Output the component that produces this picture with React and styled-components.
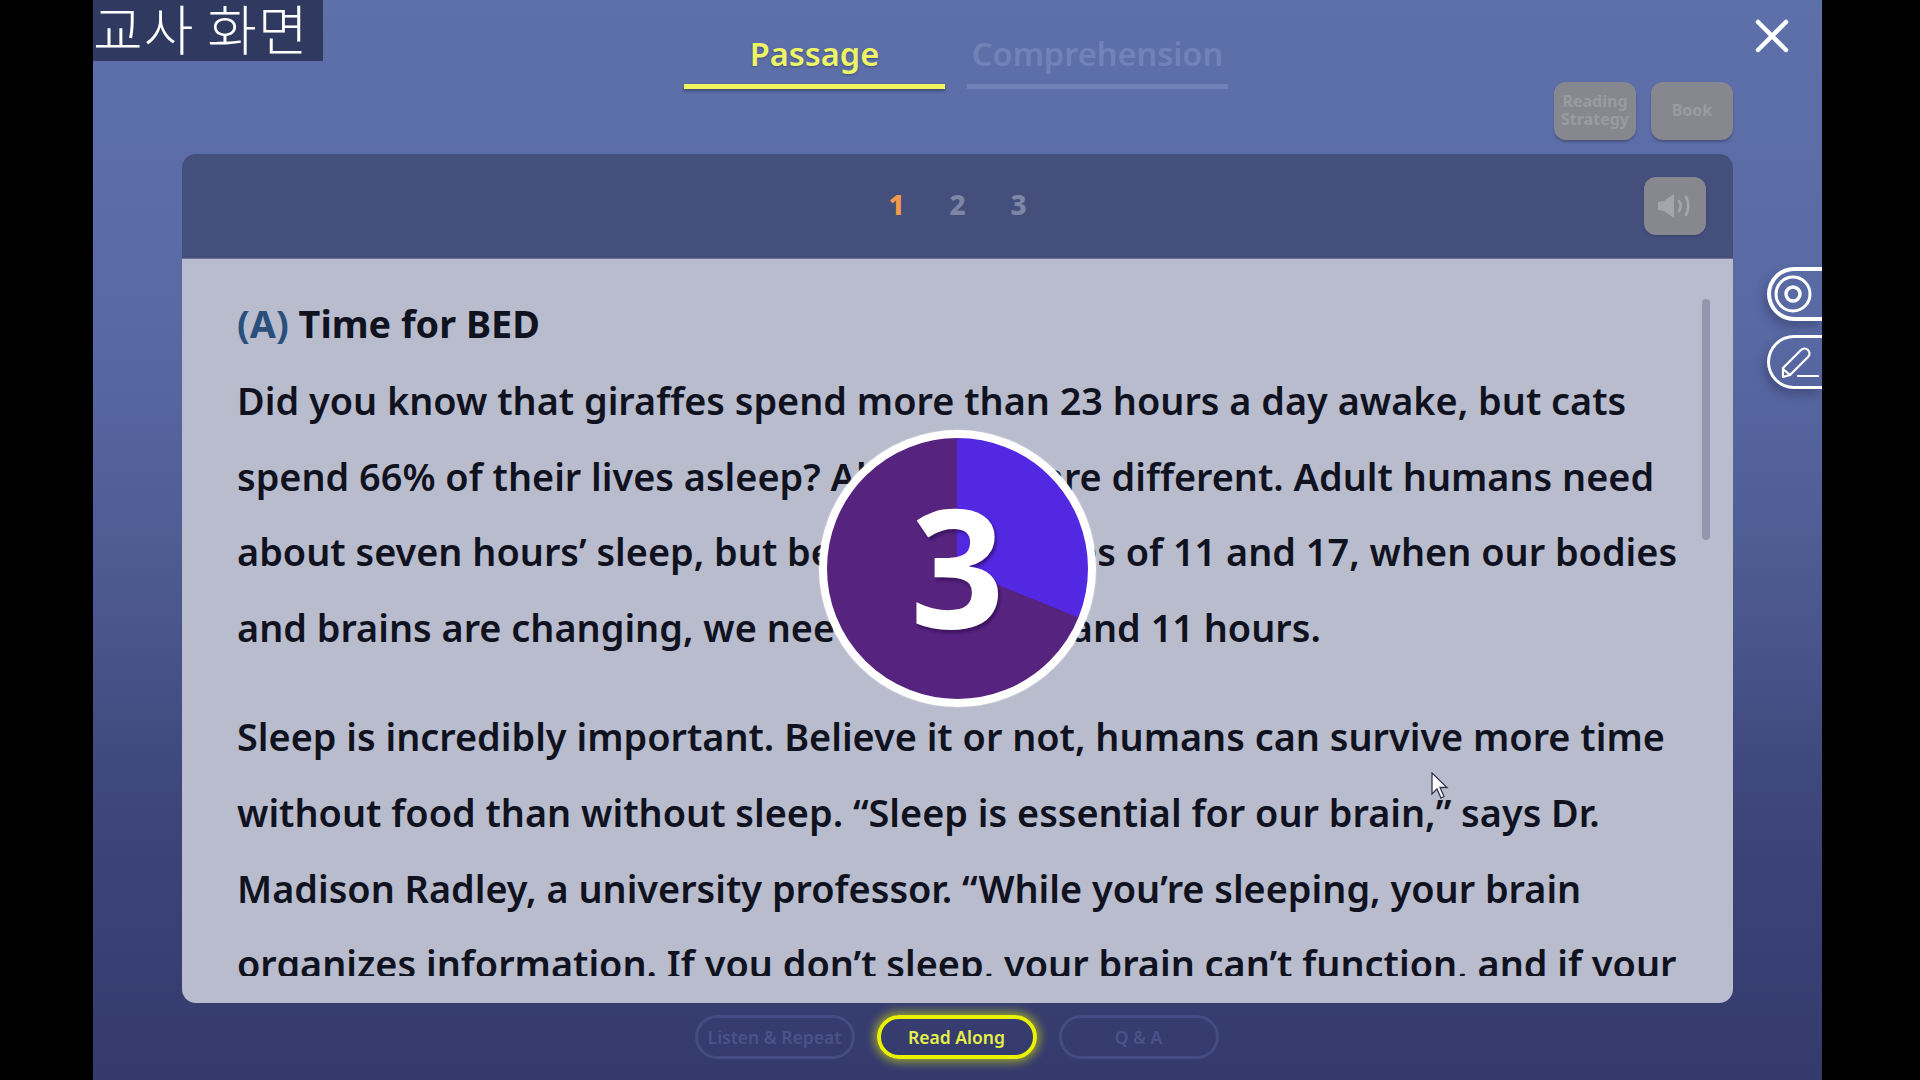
import React from "react";
import styled, { createGlobalStyle } from "styled-components";

const Global = createGlobalStyle`
  html, body { margin: 0; padding: 0; background: #000; }
  * { box-sizing: border-box; }
  body { font-family: "Noto Sans", "Open Sans", sans-serif; }
`;

const Page = styled.div`
  width: 1920px; height: 1080px; background: #000; display: flex; padding-left: 93px; overflow: hidden;
`;
const Stage = styled.main`
  position: relative; width: 1729px; height: 1080px; display: flex; flex-direction: column;
  padding: 0 89px;
  background: linear-gradient(180deg, #5e70aa 0%, #5869a3 30%, #4f5d95 50%, #3d4579 75%, #343a6c 100%);
`;
const TeacherLabel = styled.div`
  position: absolute; left: 0; top: 0; width: 230px; height: 61px; background: #303a60; color: #fff;
  font: 300 54px/56px "Noto Sans CJK KR", sans-serif; white-space: nowrap; letter-spacing: 1px;
`;
const TopBar = styled.header`
  height: 154px; display: grid; grid-template-columns: 1fr auto 1fr;
`;
const Tabs = styled.nav`
  grid-column: 2; display: flex; gap: 22px; align-self: start; margin: 29px 0 0 -3px;
`;
const Tab = styled.div`
  position: relative; width: 261px; height: 60px; text-align: center; font-size: 32.5px; font-weight: 600; line-height: 50px;
  color: ${(p) => (p.$active ? "#edf566" : "#7281b8")};
  ${(p) => p.$active && "text-shadow: 0 1px 2px rgba(40,45,80,.5);"}
  &::after {
    content: ""; position: absolute; left: 0; right: 0; bottom: 0; height: 5px;
    background: ${(p) => (p.$active ? "#f0f55e" : "#7281b8")};
    ${(p) => p.$active && "box-shadow: 0 2px 3px rgba(40,45,80,.6);"}
  }
`;
const Tools = styled.div`
  grid-column: 3; justify-self: end; align-self: end; display: flex; gap: 15px; margin-bottom: 14px;
`;
const ToolButton = styled.div`
  width: 82px; height: 58px; border-radius: 12px; background: #87888f; color: #9a9ba1;
  display: flex; align-items: center; justify-content: center; text-align: center; padding-bottom: 2px;
  font-size: 16px; font-weight: 700; line-height: 18px; box-shadow: 0 2px 2px rgba(50,55,90,.45);
`;
const Card = styled.section`
  flex: 0 0 849px; display: flex; flex-direction: column; border-radius: 14px; overflow: hidden;
`;
const CardHeader = styled.div`
  height: 105px; flex: none; background: #454f7c; display: flex; align-items: center; justify-content: center; position: relative;
  border-bottom: 1px solid #6a7199;
`;
const Pager = styled.div`
  display: flex; gap: 43px; margin-top: -4px;
`;
const PageNumber = styled.span`
  width: 18px; text-align: center; font-size: 28px; font-weight: 800; color: ${(p) => (p.$active ? "#f0994a" : "#7e86a6")};
`;
const SoundButton = styled.div`
  position: absolute; right: 27px; top: 23px; width: 62px; height: 58px; border-radius: 12px; background: #87888f;
  display: flex; align-items: center; justify-content: center;
  box-shadow: 0 1px 2px rgba(40,45,80,.4);
`;
const CardBody = styled.div`
  flex: 1; min-height: 0; background: #b9bccd; position: relative; padding: 0 0 27px 55px; display: flex;
`;
const Scroller = styled.article`
  flex: 1; overflow: hidden; color: #10131f; font-weight: 600; font-size: 37.85px; padding-top: 27px;
`;
const Title = styled.h1`
  margin: 0 0 1px; font-size: 37.8px; font-weight: 700; line-height: 76px; color: #10131f; height: 76px;
`;
const TitleTag = styled.span`
  color: #2a4f7c;
`;
const Paragraph = styled.p`
  margin: 0 0 34px; line-height: 75.6px; white-space: nowrap;
`;
const Line = styled.span`
  display: block;
`;
const ScrollThumb = styled.div`
  position: absolute; right: 23px; top: 40px; width: 8px; height: 241px; border-radius: 4px; background: #9296ae;
`;
const Footer = styled.footer`
  flex: 1; display: flex; justify-content: center; gap: 22px; padding-top: 12px; margin-left: -2px;
`;
const ModeButton = styled.div`
  width: 160px; height: 44px; border-radius: 22px; display: flex; align-items: center; justify-content: center;
  font-size: 17.5px; font-weight: 600; white-space: nowrap;
  color: ${(p) => (p.$active ? "#e6f04a" : "#4a5288")};
  border: ${(p) => (p.$active ? "4px solid #e9f200" : "3px solid #444c83")};
  ${(p) => p.$active && "box-shadow: 0 0 10px 3px rgba(233,242,0,.55);"}
`;
const CloseButton = styled.div`
  position: absolute; left: 1661px; top: 18px; width: 36px; height: 36px;
`;
const SideTab = styled.div`
  position: absolute; right: 0; top: ${(p) => p.$top}px; width: 55px; height: 54px; display: flex; align-items: center; padding-left: ${(p) => p.$pad}px;
  border: ${(p) => p.$weight}px solid #fff; border-right: 0; border-radius: 27px 0 0 27px;
  box-shadow: -3px 6px 10px rgba(35,40,80,.35);
`;
const Timer = styled.div`
  position: absolute; left: 726px; top: 430px; width: 277px; height: 277px; border-radius: 50%; padding-bottom: 8px;
  border: 8px solid #fff; display: flex; align-items: center; justify-content: center;
  background: conic-gradient(#5228e2 0deg ${(p) => p.$sweep}deg, #56237f ${(p) => p.$sweep}deg 360deg);
  color: #fff; font-size: 165px; font-weight: 700; line-height: 1; text-shadow: 2px 3px 3px rgba(40,10,70,.55);
  box-shadow: 0 0 2px rgba(255,255,255,.6);
`;
const Cursor = styled.svg`
  position: absolute; left: 1338px; top: 772px;
`;

export default function App() {
  return (
    <Page>
      <Global />
      <Stage>
        <TeacherLabel>교사 화면</TeacherLabel>
        <TopBar>
          <Tabs>
            <Tab $active>Passage</Tab>
            <Tab>Comprehension</Tab>
          </Tabs>
          <Tools>
            <ToolButton>Reading<br />Strategy</ToolButton>
            <ToolButton>Book</ToolButton>
          </Tools>
        </TopBar>
        <Card>
          <CardHeader>
            <Pager>
              <PageNumber $active>1</PageNumber>
              <PageNumber>2</PageNumber>
              <PageNumber>3</PageNumber>
            </Pager>
            <SoundButton>
              <svg width="36" height="36" viewBox="0 0 36 36" fill="none">
                <path d="M1 14v8l6 1 10 7V6L7 13z" fill="#a5a6ab" />
                <path d="M22 13c2 3 2 7 0 10" stroke="#a5a6ab" strokeWidth="2.6" strokeLinecap="round" />
                <path d="M29 9c3 5 3 13 0 18" stroke="#a5a6ab" strokeWidth="2.6" strokeLinecap="round" />
              </svg>
            </SoundButton>
          </CardHeader>
          <CardBody>
            <Scroller>
              <Title><TitleTag>(A)</TitleTag> Time for BED</Title>
              <Paragraph>
                <Line>Did you know that giraffes spend more than 23 hours a day awake, but cats</Line>
                <Line>spend 66% of their lives asleep? All animals are different. Adult humans need</Line>
                <Line>about seven hours’ sleep, but between the ages of 11 and 17, when our bodies</Line>
                <Line>and brains are changing, we need between 8 and 11 hours.</Line>
              </Paragraph>
              <Paragraph>
                <Line>Sleep is incredibly important. Believe it or not, humans can survive more time</Line>
                <Line>without food than without sleep. “Sleep is essential for our brain,” says Dr.</Line>
                <Line>Madison Radley, a university professor. “While you’re sleeping, your brain</Line>
                <Line>organizes information. If you don’t sleep, your brain can’t function, and if your</Line>
              </Paragraph>
            </Scroller>
            <ScrollThumb />
          </CardBody>
        </Card>
        <Footer>
          <ModeButton>Listen &amp; Repeat</ModeButton>
          <ModeButton $active>Read Along</ModeButton>
          <ModeButton>Q &amp; A</ModeButton>
        </Footer>
        <CloseButton>
          <svg width="36" height="36" viewBox="0 0 36 36" fill="none">
            <path d="M4 4l28 28M32 4L4 32" stroke="#fff" strokeWidth="4.5" strokeLinecap="round" />
          </svg>
        </CloseButton>
        <SideTab $top={267} $weight={4} $pad={3}>
          <svg width="38" height="38" viewBox="0 0 38 38" fill="none" stroke="#fff">
            <circle cx="19" cy="19" r="17" strokeWidth="3" />
            <circle cx="19" cy="19" r="7" strokeWidth="3.500" />
          </svg>
        </SideTab>
        <SideTab $top={335} $weight={3} $pad={5}>
          <svg width="44" height="40" viewBox="0 0 44 40" fill="none" stroke="#fff" strokeWidth="2.2" strokeLinecap="round" strokeLinejoin="round">
            <path d="M8 26L26 8c2-2 5-2 7 0s2 5 0 7L15 33l-7 2z" />
            <path d="M8 27l7 6" />
            <path d="M23 34h20" />
          </svg>
        </SideTab>
        <Timer $sweep={112}>3</Timer>
        <Cursor width="18" height="28" viewBox="0 0 18 28">
          <path d="M1 1v21l5-5 4 9 3-1.500-4-9h7z" fill="#fff" stroke="#33364f" strokeWidth="1.300" />
        </Cursor>
      </Stage>
    </Page>
  );
}
